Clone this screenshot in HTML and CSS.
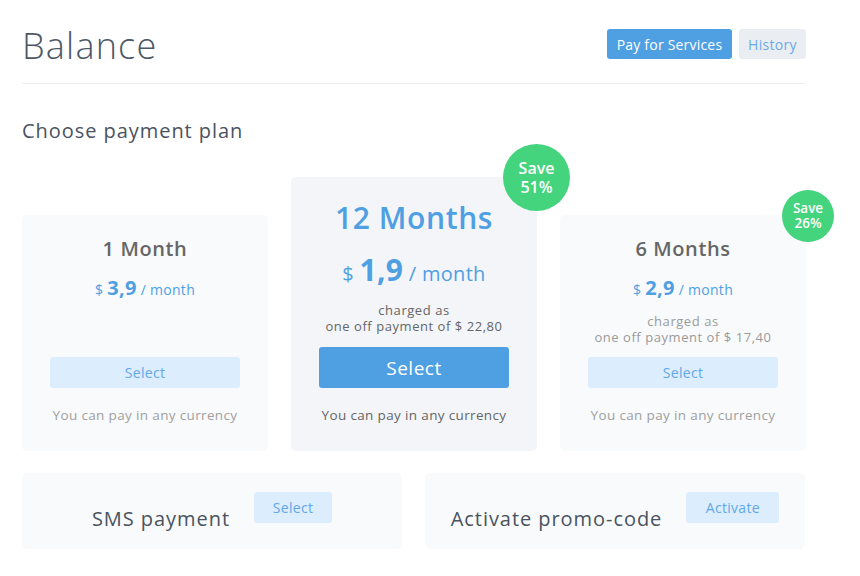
FILE: index.html
```html
<!DOCTYPE html>
<html>
<head>
<meta charset="utf-8">
<link rel="stylesheet" href="styles.css">
</head>
<body>
<div class="page">
  <header class="header">
    <h1 class="title">Balance</h1>
    <div class="actions">
      <button class="btn btn-primary-sm">Pay for Services</button>
      <button class="btn btn-ghost-sm">History</button>
    </div>
  </header>

  <h2 class="subtitle">Choose payment plan</h2>

  <div class="plans">
    <div class="plan">
      <div class="plan-name">1 Month</div>
      <div class="plan-price"><span class="cur">$</span> <span class="amount">3,9</span> <span class="per">/ month</span></div>
      <button class="btn btn-light plan-btn">Select</button>
      <div class="plan-note">You can pay in any currency</div>
    </div>

    <div class="plan plan-featured">
      <div class="badge badge-lg">Save<br>51%</div>
      <div class="plan-name">12 Months</div>
      <div class="plan-price"><span class="cur">$</span> <span class="amount">1,9</span> <span class="per">/ month</span></div>
      <div class="plan-charged">charged as<br>one off payment of $ 22,80</div>
      <button class="btn btn-primary plan-btn">Select</button>
      <div class="plan-note">You can pay in any currency</div>
    </div>

    <div class="plan">
      <div class="badge badge-sm">Save<br>26%</div>
      <div class="plan-name">6 Months</div>
      <div class="plan-price"><span class="cur">$</span> <span class="amount">2,9</span> <span class="per">/ month</span></div>
      <div class="plan-charged">charged as<br>one off payment of $ 17,40</div>
      <button class="btn btn-light plan-btn">Select</button>
      <div class="plan-note">You can pay in any currency</div>
    </div>
  </div>

  <div class="extras">
    <div class="extra">
      <div class="extra-title">SMS payment</div>
      <button class="btn btn-light extra-btn">Select</button>
    </div>
    <div class="extra">
      <div class="extra-title">Activate promo-code</div>
      <button class="btn btn-light extra-btn">Activate</button>
    </div>
  </div>
</div>
</body>
</html>
```

FILE: styles.css
```css
* { box-sizing: border-box; }
html, body { margin: 0; padding: 0; background: #fff; }
body {
  font-family: "Open Sans", "Noto Sans", sans-serif;
  color: #555;
}
.page {
  width: 784px;
  margin-left: 22px;
}
.header {
  display: flex;
  justify-content: space-between;
  align-items: flex-start;
  padding-top: 24px;
  padding-bottom: 15px;
  border-bottom: 1px solid #eceef1;
}
.title {
  margin: 0;
  font-size: 36px;
  line-height: 44px;
  font-weight: 300;
  color: #4d5866;
  letter-spacing: 1.2px;
}
.actions {
  display: flex;
  gap: 7px;
  margin-top: 5px;
}
.btn {
  font-family: inherit;
  border: 0;
  border-radius: 3px;
  cursor: pointer;
  padding: 0;
}
.btn-primary-sm {
  height: 30px;
  width: 125px;
  background: #4f9fe3;
  color: #fff;
  font-size: 14px;
  letter-spacing: 0.2px;
}
.btn-ghost-sm {
  height: 30px;
  width: 67px;
  background: #eaeef3;
  color: #6aaae6;
  font-size: 14px;
  letter-spacing: 0.3px;
}
.subtitle {
  margin: 35px 0 0;
  font-size: 20px;
  line-height: 24px;
  font-weight: 400;
  color: #4a5360;
  letter-spacing: 0.95px;
}
.plans {
  display: flex;
  align-items: flex-end;
  gap: 23px;
  margin-top: 34px;
}
.plan {
  position: relative;
  width: 246px;
  height: 236px;
  background: #f8fafc;
  border-radius: 5px;
  display: flex;
  flex-direction: column;
  align-items: center;
  padding: 22px 20px 27px;
  text-align: center;
}
.plan-featured {
  height: 274px;
  background: #f3f5f9;
  padding-top: 23px;
}
.plan-name {
  font-size: 20px;
  line-height: 24px;
  font-weight: 600;
  color: #666;
  letter-spacing: 0.6px;
}
.plan-featured .plan-name {
  font-size: 30px;
  line-height: 36px;
  color: #4f9fe3;
  letter-spacing: 0.6px;
}
.plan-price {
  margin-top: 15px;
  line-height: 24px;
  color: #4f9fe3;
  font-size: 14px;
  letter-spacing: 0.3px;
}
.plan-price .amount {
  font-size: 20px;
  font-weight: 700;
}
.plan-featured .plan-price {
  margin-top: 16px;
  line-height: 36px;
  font-size: 20px;
}
.plan-featured .plan-price .amount { font-size: 30px; }
.plan-charged {
  margin-top: 11px;
  font-size: 13px;
  line-height: 16px;
  color: #9a9a9a;
  letter-spacing: 0.55px;
}
.plan-featured .plan-charged {
  margin-top: 10px;
  color: #666;
}
.plan-btn {
  margin-top: auto;
  width: 190px;
  height: 31px;
  flex-shrink: 0;
}
.btn-light {
  background: #dcedfd;
  color: #62a8e8;
  font-size: 14px;
  letter-spacing: 0.3px;
}
.btn-primary {
  background: #4f9fe3;
  color: #fff;
  font-size: 19px;
  letter-spacing: 0.5px;
}
.plan-featured .plan-btn { height: 41px; }
.plan-note {
  margin-top: 18px;
  font-size: 13.5px;
  line-height: 18px;
  color: #a0a0a0;
  letter-spacing: 0.35px;
}
.plan-featured .plan-note { color: #666; }
.badge {
  position: absolute;
  border-radius: 50%;
  background: #44d47e;
  color: #fff;
  font-weight: 600;
  display: flex;
  align-items: center;
  justify-content: center;
  text-align: center;
}
.badge-lg {
  width: 67px;
  height: 67px;
  top: -33px;
  right: -33px;
  font-size: 16px;
  line-height: 19px;
}
.badge-sm {
  width: 52px;
  height: 52px;
  top: -25px;
  right: -28px;
  font-size: 13.5px;
  line-height: 15px;
}
.extras {
  display: flex;
  gap: 23px;
  margin-top: 22px;
}
.extra {
  width: 380px;
  height: 76px;
  background: #f8fafc;
  border-radius: 5px;
  display: flex;
  justify-content: center;
  align-items: flex-start;
  gap: 24px;
  padding-top: 19px;
}
.extra-title {
  margin-top: 15px;
  font-size: 20px;
  line-height: 24px;
  color: #4a5360;
  letter-spacing: 0.95px;
}
.extra-btn {
  height: 31px;
  width: 78px;
}
.extra:last-child .extra-btn { width: 93px; }
```
